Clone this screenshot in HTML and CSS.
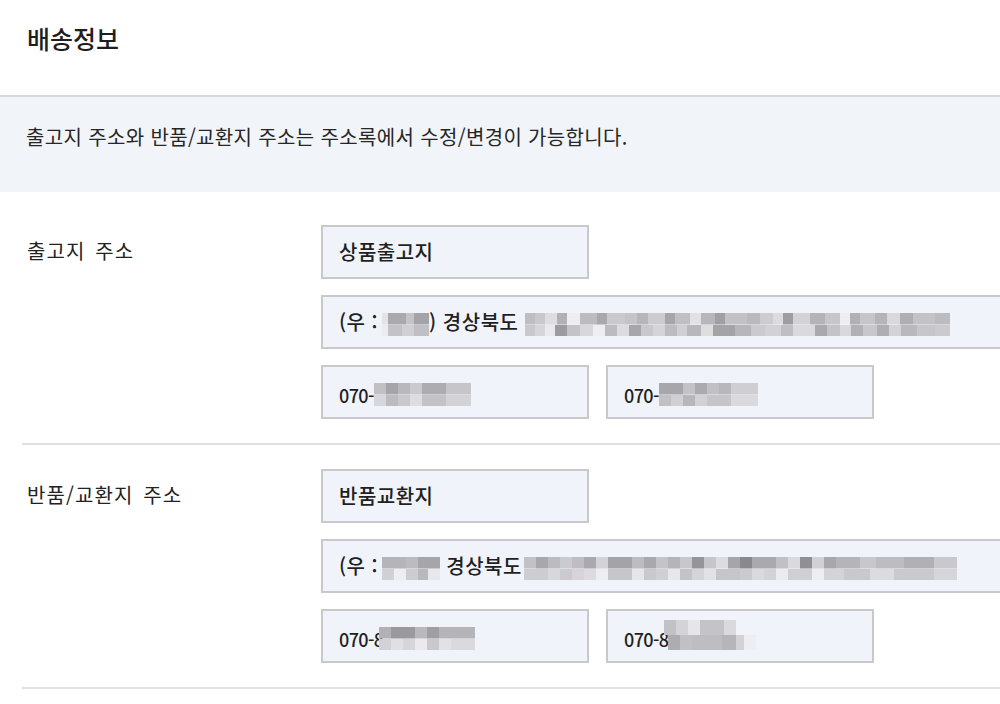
FILE: index.html
```html
<!DOCTYPE html>
<html lang="ko">
<head>
<meta charset="utf-8">
<title>배송정보</title>
<link rel="stylesheet" href="styles.css">
</head>
<body>
<div class="page">
  <header class="head">
    <h1 class="title">배송정보</h1>
  </header>
  <div class="notice">출고지 주소와 반품/교환지 주소는 주소록에서 수정/변경이 가능합니다.</div>

  <section class="row row-first">
    <div class="label">출고지 주소</div>
    <div class="fields">
      <div class="box box-name">상품출고지</div>
      <div class="box box-addr">(우 :<span class="mz mz-zip1"></span>) 경상북도 <span class="mz mz-addr1"></span></div>
      <div class="phones">
        <div class="box box-phone"><span class="num">070-</span><span class="mz mz-ph1"></span></div>
        <div class="box box-phone"><span class="num">070-</span><span class="mz mz-ph2"></span></div>
      </div>
    </div>
  </section>

  <section class="row">
    <div class="label">반품/교환지 주소</div>
    <div class="fields">
      <div class="box box-name">반품교환지</div>
      <div class="box box-addr">(우 : <span class="mz mz-zip2"></span> 경상북도<span class="mz mz-addr2"></span></div>
      <div class="phones">
        <div class="box box-phone"><span class="num">070-8</span><span class="mz mz-ph3"></span></div>
        <div class="box box-phone"><span class="num">070-8</span><span class="mz mz-ph4"></span></div>
      </div>
    </div>
  </section>
</div>
</body>
</html>
```

FILE: styles.css
```css
html, body {
  margin: 0;
  padding: 0;
  background: #ffffff;
  overflow: hidden;
}

.page {
  width: 1000px;
  height: 704px;
  overflow: hidden;
  font-family: "Noto Sans CJK KR", "Noto Sans", sans-serif;
  color: #222222;
}

.head {
  box-sizing: border-box;
  height: 97px;
  border-bottom: 2px solid #d6d6d9;
  display: flex;
  align-items: center;
  padding-left: 27px;
  padding-bottom: 20px;
}

.title {
  margin: 0;
  font-size: 25px;
  font-weight: 500;
  letter-spacing: 0;
  color: #1e1e1e;
}

.notice {
  box-sizing: border-box;
  height: 95px;
  background: #f1f4f9;
  display: flex;
  align-items: center;
  padding-left: 26px;
  padding-bottom: 16px;
  font-size: 20px;
  letter-spacing: 0.35px;
  color: #262626;
}

.row {
  margin-left: 22px;
  padding: 24px 0 24px 5px;
  border-bottom: 2px solid #dfdfe2;
  display: flex;
}

.row-first {
  padding-top: 33px;
}

.label {
  width: 294px;
  flex: none;
  height: 50px;
  display: flex;
  align-items: center;
  font-size: 20px;
  letter-spacing: 1.1px;
  word-spacing: 3px;
  color: #222222;
}

.fields {
  display: flex;
  flex-direction: column;
  gap: 16px;
}

.phones {
  display: flex;
  gap: 17px;
}

.box {
  height: 54px;
  box-sizing: border-box;
  background: #f1f3fa;
  border: 2px solid #c9c9cc;
  padding-left: 16px;
  line-height: 50px;
  font-size: 20px;
  font-weight: 500;
  letter-spacing: 0.5px;
  color: #1f1f1f;
  white-space: nowrap;
  overflow: hidden;
}

.num {
  font-size: 18px;
  letter-spacing: -0.6px;
  vertical-align: middle;
}

.box-name,
.box-phone {
  width: 268px;
}

.box-addr {
  width: 720px;
}

/* pixelated (mosaic) placeholders for blurred private data */
.mz {
  display: inline-block;
  height: 23px;
  vertical-align: middle;
  background-repeat: no-repeat;
  background-size: 100% 50%;
  background-position: top, bottom;
}

.mz-zip1 {
  width: 47px;
  margin-left: 4px;
  background-image:
    linear-gradient(90deg, #e4e4e8 0 6px, #a9a9ae 6px 24px, #c4c4c8 24px 32px, #a3a3a8 32px 47px),
    linear-gradient(90deg, #ececf0 0 6px, #c3c3c7 6px 20px, #d0d0d4 20px 32px, #bfbfc4 32px 47px);
}

.mz-addr1 {
  width: 425px;
  background-image:
    linear-gradient(90deg, #bdbdc2 0 10px, #c9c9cd 10px 20px, #dedee2 20px 32px, #b1b1b6 32px 42px, #eeeef2 42px 55px, #bcbcc0 55px 72px, #a8a8ad 72px 82px, #cacace 82px 100px, #c5c5c9 100px 112px, #b6b6ba 112px 123px, #ccccd0 123px 140px, #a5a5aa 140px 150px, #c0c0c4 150px 165px, #e2e2e6 165px 176px, #b7b7bb 176px 190px, #9f9fa4 190px 200px, #c2c2c6 200px 222px, #bababe 222px 235px, #cdcdd1 235px 248px, #dcdce0 248px 258px, #9d9da2 258px 268px, #d3d3d7 268px 285px, #b3b3b8 285px 300px, #c7c7cb 300px 315px, #eeeef2 315px 325px, #b0b0b5 325px 335px, #c6c6ca 335px 350px, #b5b5b9 350px 362px, #d9d9dd 362px 375px, #aeaeb3 375px 388px, #c3c3c7 388px 410px, #bcbcc0 410px 425px),
    linear-gradient(90deg, #c9c9cd 0 10px, #d6d6da 10px 20px, #eaeaee 20px 30px, #9b9ba0 30px 42px, #c4c4c8 42px 55px, #d8d8dc 55px 68px, #eeeef2 68px 80px, #bbbbc0 80px 92px, #dcdce0 92px 104px, #a6a6ab 104px 116px, #c9c9cd 116px 128px, #d5d5d9 128px 140px, #bdbdc1 140px 152px, #d0d0d4 152px 162px, #b8b8bc 162px 176px, #dededf 176px 188px, #a3a3a8 188px 210px, #b7b7bb 210px 226px, #cbcbcf 226px 240px, #d2d2d6 240px 256px, #bfbfc3 256px 268px, #dadade 268px 290px, #a9a9ae 290px 302px, #c4c4c8 302px 315px, #d9d9dd 315px 326px, #b1b1b6 326px 338px, #c8c8cc 338px 352px, #aeaeb3 352px 364px, #d3d3d7 364px 376px, #b9b9bd 376px 392px, #c7c7cb 392px 410px, #cbcbcf 410px 425px);
}

.mz-ph1 {
  width: 97px;
  background-image:
    linear-gradient(90deg, #c1c1c5 0 12px, #a4a4a9 12px 24px, #b9b9bd 24px 36px, #cacace 36px 48px, #acacb1 48px 72px, #c6c6ca 72px 97px),
    linear-gradient(90deg, #d7d7db 0 12px, #bcbcc0 12px 24px, #c9c9cd 24px 36px, #dddde1 36px 48px, #c3c3c7 48px 72px, #d3d3d7 72px 97px);
}

.mz-ph2 {
  width: 99px;
  background-image:
    linear-gradient(90deg, #a6a6ab 0 24px, #c3c3c7 24px 36px, #aaaaaf 36px 48px, #c1c1c5 48px 60px, #b8b8bc 60px 72px, #cfcfd3 72px 99px),
    linear-gradient(90deg, #c1c1c5 0 12px, #d0d0d4 12px 24px, #b7b7bb 24px 36px, #d2d2d6 36px 48px, #c6c6ca 48px 72px, #dadade 72px 99px);
}

.mz-zip2 {
  width: 58px;
  margin-left: -2px;
  background-image:
    linear-gradient(90deg, #b4b4b9 0 24px, #bcbcc0 24px 36px, #a5a5aa 36px 58px),
    linear-gradient(90deg, #d1d1d5 0 12px, #eeeef2 12px 24px, #cdcdd1 24px 36px, #b9b9bd 36px 46px, #e8e8ec 46px 58px);
}

.mz-addr2 {
  width: 433px;
  margin-left: 2px;
  background-image:
    linear-gradient(90deg, #c2c2c6 0 12px, #a7a7ac 12px 24px, #bcbcc0 24px 36px, #cbcbcf 36px 48px, #c0bcc4 48px 60px, #a9a9ae 60px 72px, #d3d3d7 72px 84px, #a3a3a8 84px 108px, #bdbdc1 108px 120px, #a8a8ad 120px 132px, #c4c4c8 132px 144px, #b4b4b9 144px 156px, #c8c8cc 156px 168px, #959599 168px 180px, #c6c6ca 180px 192px, #dcdce0 192px 204px, #a5a5aa 204px 216px, #88888d 216px 228px, #a9a9ae 228px 252px, #c1c1c5 252px 264px, #dadade 264px 276px, #8f8f94 276px 288px, #d1d1d5 288px 300px, #a7a7ac 300px 312px, #b4b4b9 312px 336px, #c8c8cc 336px 352px, #bdbdc1 352px 380px, #b0b0b5 380px 410px, #c9c9cd 410px 433px),
    linear-gradient(90deg, #cdcdd1 0 24px, #d8d8dc 24px 36px, #cbcbcf 36px 48px, #d6d3db 48px 60px, #dcdce0 60px 72px, #eeeef2 72px 84px, #c7c7cb 84px 108px, #e6e6ea 108px 120px, #c9c9cd 120px 132px, #d0d0d4 132px 144px, #e8e8ec 144px 156px, #c4c4c8 156px 168px, #d5d5d9 168px 180px, #e2e2e6 180px 192px, #c6c6ca 192px 216px, #cbcbcf 216px 228px, #dadade 228px 240px, #d3d3d7 240px 252px, #ececf0 252px 264px, #d0d0d4 264px 288px, #eeeef2 288px 300px, #d4d4d8 300px 320px, #c9c9cd 320px 346px, #dcdce0 346px 370px, #cacace 370px 410px, #d6d6da 410px 433px);
}

.mz-ph3 {
  width: 96px;
  margin-left: -4px;
  background-image:
    linear-gradient(90deg, #b1b1b6 0 12px, #99999e 12px 36px, #b9b9bd 36px 48px, #9e9ea3 48px 60px, #b4b4b9 60px 96px),
    linear-gradient(90deg, #d2d2d6 0 12px, #e0e0e4 12px 24px, #d6d6da 24px 36px, #eaeaee 36px 48px, #c9c9cd 48px 60px, #e2e2e6 60px 72px, #dadade 72px 96px);
}

.mz-ph4 {
  width: 92px;
  margin-left: -4px;
  height: 30px;
  position: relative;
  top: -4px;
  background-image:
    linear-gradient(90deg, #c2c2c6 0 12px, #d4d4d8 12px 24px, #e6e6ea 24px 36px, #c4c4c8 36px 60px, #dadade 60px 72px, transparent 72px 92px),
    linear-gradient(90deg, transparent 0 4px, #acacb1 4px 16px, #c1c1c5 16px 28px, #bebec2 28px 58px, #b6b6ba 58px 72px, #d3d3d7 72px 80px, #eeeef2 80px 92px);
}
```
